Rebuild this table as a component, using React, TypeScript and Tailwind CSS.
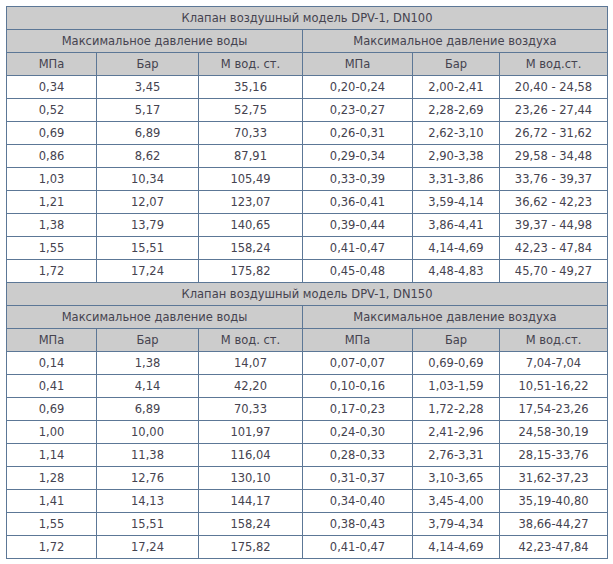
import React from "react";

type Block = {
  title: string;
  airUnit: string;
  rows: string[][];
};

const blocks: Block[] = [
  {
    title: "Клапан воздушный модель DPV-1, DN100",
    airUnit: "М вод.ст.",
    rows: [
      ["0,34", "3,45", "35,16", "0,20-0,24", "2,00-2,41", "20,40 - 24,58"],
      ["0,52", "5,17", "52,75", "0,23-0,27", "2,28-2,69", "23,26 - 27,44"],
      ["0,69", "6,89", "70,33", "0,26-0,31", "2,62-3,10", "26,72 - 31,62"],
      ["0,86", "8,62", "87,91", "0,29-0,34", "2,90-3,38", "29,58 - 34,48"],
      ["1,03", "10,34", "105,49", "0,33-0,39", "3,31-3,86", "33,76 - 39,37"],
      ["1,21", "12,07", "123,07", "0,36-0,41", "3,59-4,14", "36,62 - 42,23"],
      ["1,38", "13,79", "140,65", "0,39-0,44", "3,86-4,41", "39,37 - 44,98"],
      ["1,55", "15,51", "158,24", "0,41-0,47", "4,14-4,69", "42,23 - 47,84"],
      ["1,72", "17,24", "175,82", "0,45-0,48", "4,48-4,83", "45,70 - 49,27"],
    ],
  },
  {
    title: "Клапан воздушный модель DPV-1, DN150",
    airUnit: "М вод.ст.",
    rows: [
      ["0,14", "1,38", "14,07", "0,07-0,07", "0,69-0,69", "7,04-7,04"],
      ["0,41", "4,14", "42,20", "0,10-0,16", "1,03-1,59", "10,51-16,22"],
      ["0,69", "6,89", "70,33", "0,17-0,23", "1,72-2,28", "17,54-23,26"],
      ["1,00", "10,00", "101,97", "0,24-0,30", "2,41-2,96", "24,58-30,19"],
      ["1,14", "11,38", "116,04", "0,28-0,33", "2,76-3,31", "28,15-33,76"],
      ["1,28", "12,76", "130,10", "0,31-0,37", "3,10-3,65", "31,62-37,23"],
      ["1,41", "14,13", "144,17", "0,34-0,40", "3,45-4,00", "35,19-40,80"],
      ["1,55", "15,51", "158,24", "0,38-0,43", "3,79-4,34", "38,66-44,27"],
      ["1,72", "17,24", "175,82", "0,41-0,47", "4,14-4,69", "42,23-47,84"],
    ],
  },
];

const cell = "border border-[#5c7796] h-[23px] p-0 text-center align-middle";
const head = cell + " bg-[#cccccc]";

const App = () => {
  return (
    <div className="min-h-screen bg-white pt-[6px] pl-[6px]">
      <table
        className="border-collapse table-fixed w-[601px] text-[11.5px] leading-[14px] text-[#45434f]"
        style={{ fontFamily: '"DejaVu Sans", Verdana, sans-serif' }}
      >
        <colgroup>
          <col className="w-[90px]" />
          <col className="w-[102px]" />
          <col className="w-[104px]" />
          <col className="w-[110px]" />
          <col className="w-[87px]" />
          <col className="w-[108px]" />
        </colgroup>
        <tbody>
          {blocks.map((block) => (
            <React.Fragment key={block.title}>
              <tr>
                <td colSpan={6} className={head}>
                  {block.title}
                </td>
              </tr>
              <tr>
                <td colSpan={3} className={head}>
                  Максимальное давление воды
                </td>
                <td colSpan={3} className={head}>
                  Максимальное давление воздуха
                </td>
              </tr>
              <tr>
                <td className={head}>МПа</td>
                <td className={head}>Бар</td>
                <td className={head}>М вод. ст.</td>
                <td className={head}>МПа</td>
                <td className={head}>Бар</td>
                <td className={head}>{block.airUnit}</td>
              </tr>
              {block.rows.map((row, i) => (
                <tr key={i}>
                  {row.map((v, j) => (
                    <td key={j} className={cell}>
                      {v}
                    </td>
                  ))}
                </tr>
              ))}
            </React.Fragment>
          ))}
        </tbody>
      </table>
    </div>
  );
};

export default App;
